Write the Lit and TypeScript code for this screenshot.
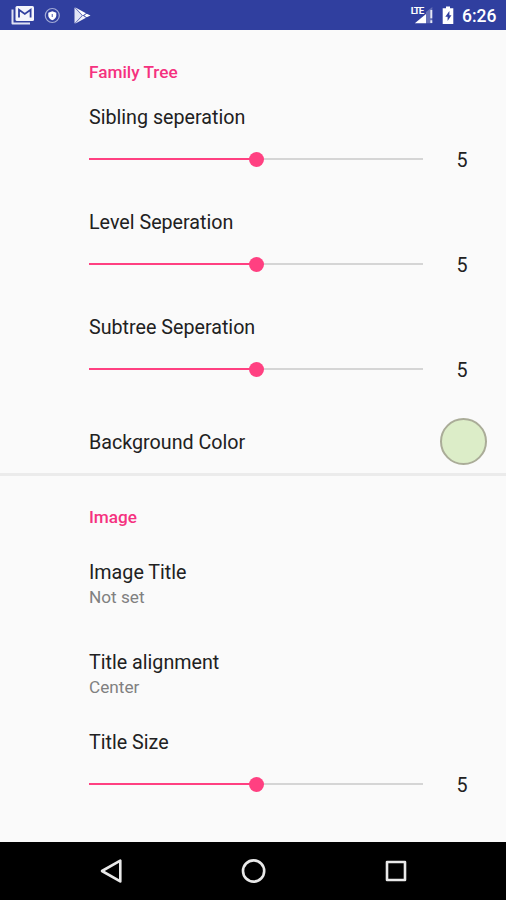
import { LitElement, html, css, svg } from "lit";
import { customElement, property } from "lit/decorators.js";

@customElement("status-bar")
class StatusBar extends LitElement {
  static styles = css`
    :host { display: flex; align-items: center; justify-content: space-between; height: 30px; background: #303f9f; color: #fff; }
    svg { display: block; }
    .end { display: flex; align-items: center; padding-right: 8px; }
    .time { font: 500 17.5px/30px Roboto, sans-serif; padding-top: 1px; width: 36px; white-space: nowrap; }
  `;
  render() {
    return html`
      <svg width="110" height="30" viewBox="0 0 110 30">
        <path d="M12.5 9.5V23.5H30" fill="none" stroke="#dfe2f3" stroke-width="2" stroke-linejoin="round" />
        <rect x="15.5" y="6" width="18.5" height="15" rx="1.5" fill="#f4f5fb" />
        <path d="M19 17.5V9.8L24.8 14L30.6 9.8V17.5" fill="none" stroke="#303f9f" stroke-width="1.8" />
        <circle cx="52.3" cy="15.5" r="7" fill="none" stroke="#a3abd6" stroke-width="1.2" />
        <path d="M48.3 12.7L52.3 11.3L56.3 12.7V15.5C56.3 17.7 54.6 19.2 52.3 20.3C50 19.2 48.3 17.7 48.3 15.5Z" fill="#fff" />
        <path d="M52.3 14V17" stroke="#7781c0" stroke-width="1.3" />
        <path d="M74.5 7.6V23.4L82 15.5Z" fill="#e3e6f5" />
        <path d="M75 7.2L86 13.2L82.8 15.5Z" fill="#fff" />
        <path d="M75 23.8L86 17.8L82.8 15.5Z" fill="#f0f1fa" />
        <path d="M84.2 15.5L86.7 13.7L90.5 15.5L86.7 17.3Z" fill="#fff" />
      </svg>
      <div class="end">
        <svg width="52" height="30" viewBox="410 0 52 30">
          <text x="410.7" y="14" font-family="Roboto, sans-serif" font-size="9.8" font-weight="700" letter-spacing="-1.1" fill="#fff">LTE</text>
          <path d="M414.8 23.3L426 14V23.3Z" fill="#fff" />
          <path d="M426 12L432.3 7V23.3H426Z" fill="#6670b7" />
          <path d="M431.3 10V18.3M431.3 20.3V23" stroke="#e5e8f5" stroke-width="1.9" />
          <path d="M446 6.5H450V8.3H453.3V24H442.7V8.3H446Z" fill="#fff" />
          <path d="M449.4 11L445.3 16.8H447.6V21L451.5 15.2H449.4Z" fill="#303f9f" />
        </svg>
        <span class="time">6:26</span>
      </div>`;
  }
}

@customElement("slider-row")
class SliderRow extends LitElement {
  @property() label = "";
  @property({ type: Number }) value = 5;
  static styles = css`
    :host { display: block; height: 105px; padding: 11px 0 0 89px; box-sizing: border-box; }
    .label { font-size: 19.7px; line-height: 24px; }
    .control { display: flex; align-items: center; margin-top: 17px; height: 24px; }
    .track { display: flex; flex: none; align-items: center; width: 334px; }
    .fill { height: 2px; background: #ff4081; }
    .thumb { width: 15px; height: 15px; border-radius: 50%; background: #ff4081; margin: 0 -7.5px; z-index: 1; }
    .rest { flex: 1; height: 2px; background: #d5d5d5; }
    .value { flex: none; width: 78px; text-align: center; font-size: 19.7px; line-height: 24px; padding-top: 4px; }
  `;
  render() {
    return html`
      <div class="label">${this.label}</div>
      <div class="control">
        <div class="track">
          <div class="fill" style="width:${this.value * 10}%"></div>
          <div class="thumb"></div>
          <div class="rest"></div>
        </div>
        <div class="value">${this.value}</div>
      </div>`;
  }
}

@customElement("nav-bar")
class NavBar extends LitElement {
  static styles = css`
    :host { display: flex; align-items: center; justify-content: space-between; height: 58px; padding: 0 95px 0 96px; box-sizing: border-box; background: #000; }
    svg { fill: none; stroke: #e9e9e9; stroke-width: 2.6; stroke-linejoin: round; }
  `;
  render() {
    const shapes = [
      svg`<path d="M24.3 4.6V25.4L6 15Z" />`,
      svg`<circle cx="14.6" cy="15" r="10.6" />`,
      svg`<rect x="6" y="6" width="18" height="18" />`,
    ];
    return shapes.map((shape) => html`<svg width="30" height="30" viewBox="0 0 30 30">${shape}</svg>`);
  }
}

@customElement("app-root")
class AppRoot extends LitElement {
  static styles = css`
    :host { display: flex; flex-direction: column; height: 900px; background: #fafafa; color: #212121; font-family: Roboto, sans-serif; overflow: hidden; }
    main { flex: 1; min-height: 0; overflow: hidden; }
    h2 { margin: 0; padding: 30px 0 0 89px; height: 65px; box-sizing: border-box; color: #f5317f; font-size: 17.2px; font-weight: 500; line-height: 24px; }
    .divider + h2 { padding-top: 29px; }
    .color { display: flex; align-items: center; justify-content: space-between; height: 63px; padding: 0 19px 0 89px; }
    .title { font-size: 19.7px; line-height: 24px; }
    .color .title { padding-top: 2px; }
    .swatch { width: 47px; height: 47px; border: 2px solid #aaac98; border-radius: 50%; box-sizing: border-box; background: #dcedc8; }
    .divider { height: 3px; background: #ebebeb; }
    .item { height: 90px; padding: 20px 0 0 89px; box-sizing: border-box; }
    .summary { font-size: 17.2px; line-height: 26px; margin-top: -1px; color: #808080; }
    .last { margin-top: -1px; }
  `;
  render() {
    return html`
      <status-bar></status-bar>
      <main>
        <h2>Family Tree</h2>
        <slider-row label="Sibling seperation"></slider-row>
        <slider-row label="Level Seperation"></slider-row>
        <slider-row label="Subtree Seperation"></slider-row>
        <div class="color"><span class="title">Background Color</span><span class="swatch"></span></div>
        <div class="divider"></div>
        <h2>Image</h2>
        <div class="item"><div class="title">Image Title</div><div class="summary">Not set</div></div>
        <div class="item"><div class="title">Title alignment</div><div class="summary">Center</div></div>
        <slider-row class="last" label="Title Size"></slider-row>
      </main>
      <nav-bar></nav-bar>`;
  }
}
